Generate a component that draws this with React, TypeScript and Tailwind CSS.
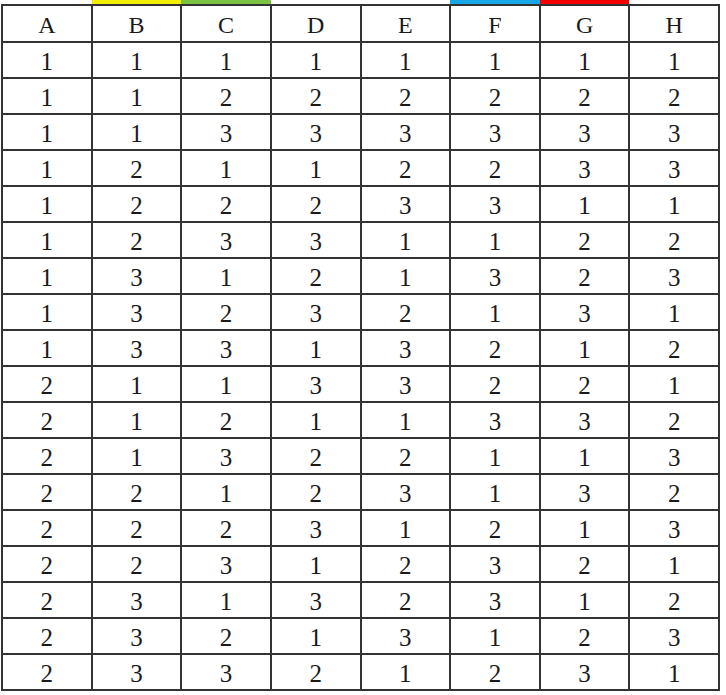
import React from "react";

const rows: number[][] = [
  [1, 1, 1, 1, 1, 1, 1, 1],
  [1, 1, 2, 2, 2, 2, 2, 2],
  [1, 1, 3, 3, 3, 3, 3, 3],
  [1, 2, 1, 1, 2, 2, 3, 3],
  [1, 2, 2, 2, 3, 3, 1, 1],
  [1, 2, 3, 3, 1, 1, 2, 2],
  [1, 3, 1, 2, 1, 3, 2, 3],
  [1, 3, 2, 3, 2, 1, 3, 1],
  [1, 3, 3, 1, 3, 2, 1, 2],
  [2, 1, 1, 3, 3, 2, 2, 1],
  [2, 1, 2, 1, 1, 3, 3, 2],
  [2, 1, 3, 2, 2, 1, 1, 3],
  [2, 2, 1, 2, 3, 1, 3, 2],
  [2, 2, 2, 3, 1, 2, 1, 3],
  [2, 2, 3, 1, 2, 3, 2, 1],
  [2, 3, 1, 3, 2, 3, 1, 2],
  [2, 3, 2, 1, 3, 1, 2, 3],
  [2, 3, 3, 2, 1, 2, 3, 1],
];

const headers = ["A", "B", "C", "D", "E", "F", "G", "H"];
const bars = ["", "bg-[#f2f000]", "bg-[#7cc242]", "", "", "bg-[#16a8e6]", "bg-[#f20000]", ""];

export default function App() {
  return (
    <div className="bg-white w-[726px] h-[695px]" style={{ fontFamily: '"Liberation Serif", "DejaVu Serif", serif' }}>
      <div className="ml-[1px] w-[719px]">
        <div className="grid grid-cols-8 h-[4px] px-[1px]">
          {bars.map((b, i) => (
            <div key={i} className={b} />
          ))}
        </div>
        <table className="w-[719px] table-fixed border-collapse border-2 border-[#333]">
          <thead>
            <tr>
              {headers.map((h) => (
                <td key={h} className="h-[37px] border-2 border-[#333] text-center text-[24px] leading-none text-[#1a1a1a] p-0 pt-[3px]">
                  {h}
                </td>
              ))}
            </tr>
          </thead>
          <tbody>
            {rows.map((r, i) => (
              <tr key={i}>
                {r.map((v, j) => (
                  <td key={j} className="h-[36px] border-2 border-[#333] text-center text-[25px] leading-none text-[#1a1a1a] p-0 pt-[3px]">
                    {v}
                  </td>
                ))}
              </tr>
            ))}
          </tbody>
        </table>
      </div>
    </div>
  );
}
